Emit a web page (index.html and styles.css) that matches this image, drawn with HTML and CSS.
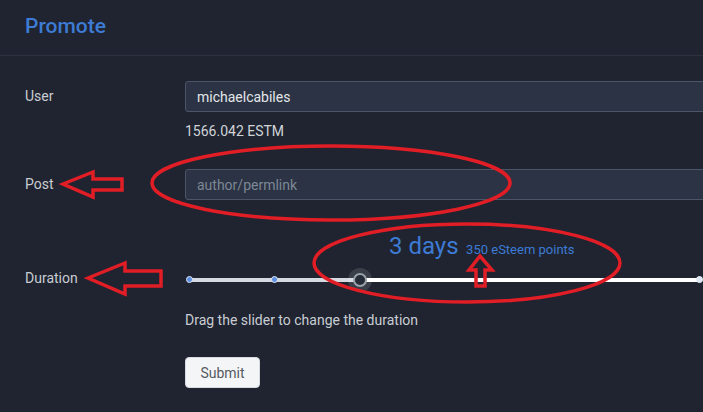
FILE: index.html
```html
<!DOCTYPE html>
<html lang="en">
<head>
    <meta charset="UTF-8">
    <meta name="viewport" content="width=device-width, initial-scale=1.0">
    <title>Promote</title>
    <link rel="stylesheet" href="styles.css">
</head>
<body>

    <div class="page">
        <header class="page-head">
            <h1>Promote</h1>
        </header>

        <form class="promote-form">
            <!-- User -->
            <div class="form-row">
                <label class="form-label">User</label>
                <div class="form-field">
                    <input type="text" class="text-input" value="michaelcabiles" />
                    <div class="balance">1566.042 ESTM</div>
                </div>
            </div>

            <!-- Post -->
            <div class="form-row post-row">
                <label class="form-label">Post</label>
                <div class="form-field">
                    <input type="text" class="text-input" placeholder="author/permlink" />
                </div>
            </div>

            <!-- Duration -->
            <div class="form-row duration-row">
                <label class="form-label slider-label">Duration</label>
                <div class="form-field">
                    <div class="duration-value">
                        <span class="days">3 days</span>
                        <span class="points">350 eSteem points</span>
                    </div>
                    <div class="slider">
                        <div class="slider-track"></div>
                        <div class="slider-fill" style="width: 33.333%"></div>
                        <span class="slider-dot" style="left: 0%"></span>
                        <span class="slider-dot" style="left: 16.667%"></span>
                        <span class="slider-dot end" style="left: 100%"></span>
                        <span class="slider-handle" style="left: 33.333%"></span>
                    </div>
                    <p class="help">Drag the slider to change the duration</p>
                    <button type="button" class="submit-btn">Submit</button>
                </div>
            </div>
        </form>

        <!-- red markup drawn over the screenshot -->
        <svg class="marks" width="703" height="412" viewBox="0 0 703 412">
            <ellipse cx="331" cy="183" rx="179" ry="37" />
            <ellipse cx="467" cy="263" rx="153" ry="39" />
            <polygon points="63,184 93,172 93,179 122,179 122,190 93,190 93,197" />
            <polygon points="88,278 125,263 125,271 161,271 161,286 125,286 125,294" />
            <polygon points="480,256 469,270 476,270 476,286 485,286 485,270 492,270" />
        </svg>
    </div>

</body>
</html>
```

FILE: styles.css
```css
/* General styles */
body {
    margin: 0;
    padding: 0;
    background: #1f2430;
    color: #c9cdd3;
    font-family: Roboto, "Liberation Sans", Arial, sans-serif;
    font-size: 14px;
    overflow: hidden;
}

.page {
    position: relative;
    width: 703px;
    height: 412px;
    overflow: hidden;
}

.page-head {
    height: 51px;
    padding: 0 0 4px 25px;
    border-bottom: 1px solid #2c3240;
    display: flex;
    align-items: center;
}

.page-head h1 {
    margin: 0;
    font-size: 21px;
    font-weight: 500;
    color: #3d7bd4;
}

.promote-form {
    padding: 25px 0 0 25px;
}

.form-row {
    display: grid;
    grid-template-columns: 160px 600px;
    align-items: start;
}

.form-label {
    line-height: 31px;
    color: #c9cdd3;
}

.text-input {
    box-sizing: border-box;
    width: 600px;
    height: 31px;
    padding: 0 11px;
    background: #2b3344;
    border: 1px solid #4a5568;
    border-radius: 3px;
    color: #e4e6ea;
    font-family: inherit;
    font-size: 14px;
    outline: none;
}

.text-input::placeholder {
    color: #7d8796;
}

.balance {
    margin-top: 10px;
    line-height: 18px;
    color: #d0d3d8;
}

.post-row {
    margin-top: 29px;
}

/* Duration slider */
.duration-row {
    margin-top: 33px;
}

.slider-label {
    margin-top: 35px;
    line-height: 20px;
}

.duration-value {
    margin-left: 204px;
    line-height: 26px;
    color: #3d7bd4;
}

.days {
    font-size: 24px;
}

.points {
    font-size: 13px;
    margin-left: 4px;
}

.slider {
    position: relative;
    width: 510px;
    height: 20px;
    margin: 7px 0 0 5px;
}

.slider-track,
.slider-fill {
    position: absolute;
    left: 0;
    top: 8px;
    height: 4px;
    border-radius: 2px;
}

.slider-track {
    width: 100%;
    background: #ffffff;
}

.slider-fill {
    background: #d5d9e0;
}

.slider-dot {
    position: absolute;
    top: 10px;
    width: 5px;
    height: 5px;
    margin: -4px 0 0 -4px;
    border: 1.5px solid #dfe6f2;
    border-radius: 50%;
    background: #5b8fe0;
}

.slider-dot.end {
    background: #dbe5f5;
    border-color: #eef2f8;
}

.slider-handle {
    position: absolute;
    top: 10px;
    width: 10px;
    height: 10px;
    margin: -7px 0 0 -7px;
    border: 2px solid #9aa1ab;
    border-radius: 50%;
    background: #262c38;
    box-shadow: 0 0 0 5px rgba(255, 255, 255, 0.12);
}

.help {
    margin: 21px 0 0;
    line-height: 18px;
    color: #c9cdd3;
}

.submit-btn {
    margin-top: 28px;
    width: 75px;
    height: 31px;
    background: #f4f5f7;
    border: 1px solid #d8dbe0;
    border-radius: 4px;
    color: #555a62;
    font-family: inherit;
    font-size: 14px;
    cursor: pointer;
}

/* Red annotations over the page */
.marks {
    position: absolute;
    left: 0;
    top: 0;
    pointer-events: none;
}

.marks ellipse,
.marks polygon {
    fill: none;
    stroke: #e11d25;
    stroke-width: 3.5;
    stroke-linejoin: miter;
}
```
